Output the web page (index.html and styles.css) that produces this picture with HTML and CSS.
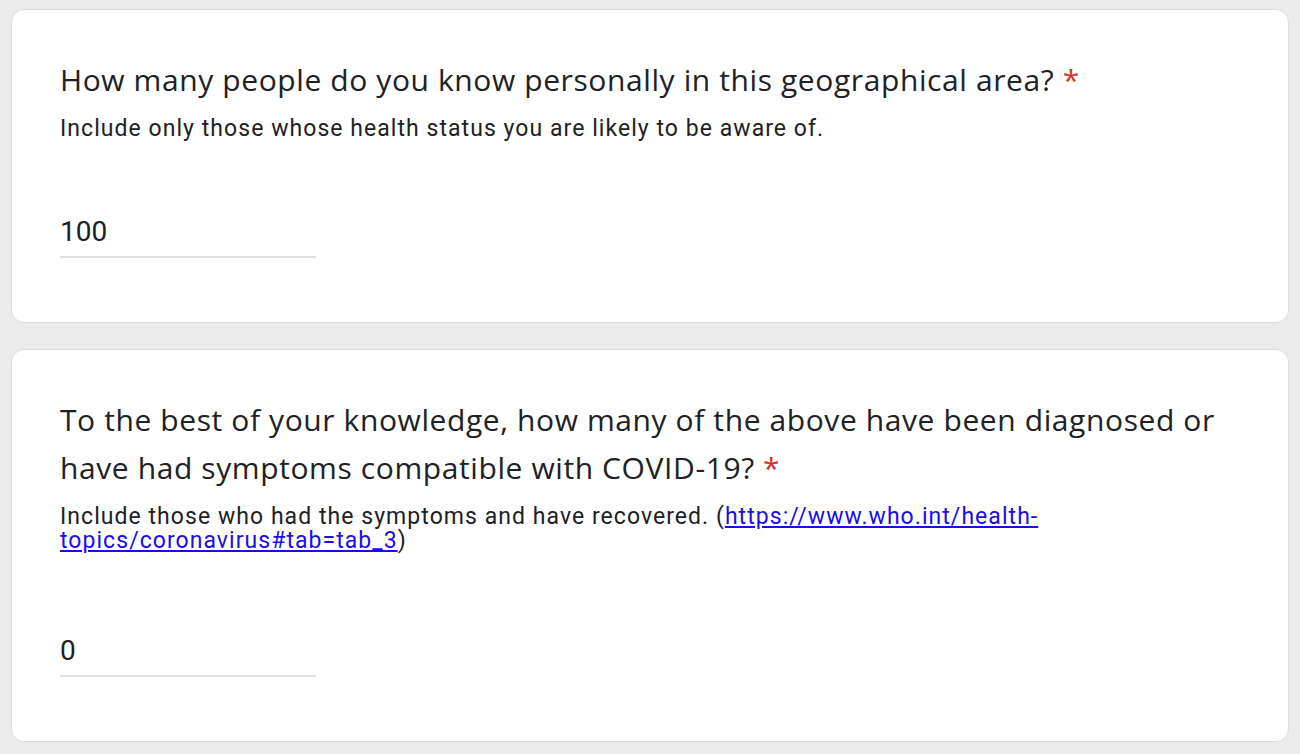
FILE: index.html
```html
<!DOCTYPE html>
<html lang="en">
<head>
<meta charset="utf-8">
<title>Form questions</title>
<link rel="stylesheet" href="styles.css">
</head>
<body>
<main class="form">
  <section class="card">
    <h2 class="q-title">How many people do you know personally in this geographical area? <span class="req">*</span></h2>
    <p class="q-desc">Include only those whose health status you are likely to be aware of.</p>
    <input class="q-input" type="text" value="100" aria-label="Answer">
  </section>
  <section class="card">
    <h2 class="q-title">To the best of your knowledge, how many of the above have been diagnosed or have had symptoms compatible with COVID-19? <span class="req">*</span></h2>
    <p class="q-desc q-desc--link">Include those who had the symptoms and have recovered. (<a href="#">https://www.who.int/health-topics/coronavirus#tab=tab_3</a>)</p>
    <input class="q-input" type="text" value="0" aria-label="Answer">
  </section>
</main>
</body>
</html>
```
FILE: styles.css
```css
html, body {
  margin: 0;
  padding: 0;
  background: #ebebeb;
}
body {
  font-family: Roboto, "Liberation Sans", Arial, sans-serif;
  color: #202124;
}
.form {
  display: flex;
  flex-direction: column;
  gap: 26px;
  padding: 9px 11px 0 11px;
}
.card {
  background: #ffffff;
  border: 1px solid #dadce0;
  border-radius: 13px;
  padding: 46px 48px 64px 48px;
  display: flex;
  flex-direction: column;
  align-items: flex-start;
}
.q-title {
  margin: 0;
  font-family: "Open Sans", Roboto, "Liberation Sans", Arial, sans-serif;
  font-weight: 400;
  font-size: 30px;
  line-height: 48px;
  letter-spacing: 0.6px;
  color: #202124;
}
.req {
  color: #d93025;
}
.q-desc {
  margin: 13px 0 0 0;
  font-family: Roboto, "Liberation Sans", Arial, sans-serif;
  font-size: 23px;
  line-height: 24px;
  letter-spacing: 1.05px;
  color: #202124;
}
.q-desc--link {
  margin-bottom: 7px;
}
.q-desc a {
  color: #1a0dea;
  text-decoration: underline;
}
.q-input {
  margin-top: 70px;
  width: 256px;
  height: 40px;
  padding: 0 0 5px 0;
  border: none;
  border-bottom: 2px solid #e0e0e0;
  outline: none;
  background: transparent;
  font-family: Roboto, "Liberation Sans", Arial, sans-serif;
  font-size: 28px;
  color: #202124;
  box-sizing: content-box;
}
```
